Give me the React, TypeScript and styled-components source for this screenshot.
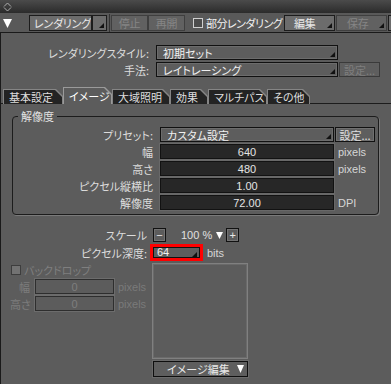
import styled, { createGlobalStyle } from "styled-components";

const GlobalStyle = createGlobalStyle`
  html, body {
    margin: 0;
    padding: 0;
    background: #5c5c5c;
  }
  body {
    font-family: "Noto Sans CJK JP", "Noto Sans", sans-serif;
    font-size: 11px;
    font-feature-settings: "palt";
    color: #dcdcdc;
  }
  * {
    box-sizing: border-box;
  }
`;

const Root = styled.div`
  width: 391px;
  height: 384px;
  overflow: hidden;
  background: #5c5c5c;
  display: flex;
  flex-direction: column;
  line-height: 14px;
`;

const TitleBar = styled.div`
  height: 13px;
  flex: none;
  display: flex;
  align-items: center;
  padding-left: 3px;
  background: linear-gradient(#4b4b4b, #2b2b2b);
`;

const Toolbar = styled.div`
  height: 19px;
  flex: none;
  display: flex;
  align-items: center;
  padding: 1px 0 0 3px;
  background: #595959;
`;

const MenuArrow = styled.svg`
  flex: none;
  margin-right: 17px;
`;

const ToolButton = styled.div<{ $w: number; $disabled?: boolean; $pad?: number }>`
  width: ${(p) => p.$w}px;
  height: 16px;
  flex: none;
  display: flex;
  align-items: center;
  justify-content: ${(p) => (p.$pad === undefined ? "center" : "flex-start")};
  padding-left: ${(p) => p.$pad ?? 0}px;
  border: 1px solid ${(p) => (p.$disabled ? "#3f3f3f" : "#1c1c1c")};
  background: ${(p) => (p.$disabled ? "#616161" : "#6c6c6c")};
  color: ${(p) => (p.$disabled ? "#858585" : "#e8e8e8")};
  letter-spacing: -0.2px;
  overflow: hidden;
  white-space: nowrap;
`;

const Corner = styled.span`
  flex: none;
  width: 5px;
  height: 5px;
  margin: auto 2px 2px auto;
  align-self: flex-end;
  background: #111;
  clip-path: polygon(100% 0, 100% 100%, 0 100%);
`;

const Separator = styled.div`
  width: 1px;
  height: 19px;
  margin: 0 1px 0 2px;
  background: #333;
  flex: none;
`;

const Check = styled.span<{ $disabled?: boolean }>`
  flex: none;
  width: 10px;
  height: 10px;
  border: 1px solid ${(p) => (p.$disabled ? "#3d3d3d" : "#cfcfcf")};
  background: ${(p) => (p.$disabled ? "#727272" : "#4c4c4c")};
`;

const CheckText = styled.span<{ $w?: number; $disabled?: boolean }>`
  flex: none;
  width: ${(p) => (p.$w ? `${p.$w}px` : "auto")};
  margin-left: 3px;
  color: ${(p) => (p.$disabled ? "#7f7f7f" : "#f0f0f0")};
  letter-spacing: ${(p) => (p.$disabled ? "0" : "-0.5px")};
  white-space: nowrap;
`;

const Panel = styled.div`
  flex: 1;
  border-top: 1px solid #1a1a1a;
  border-left: 1px solid #1a1a1a;
  display: flex;
  flex-direction: column;
`;

const StyleRows = styled.div`
  display: flex;
  flex-direction: column;
  gap: 2px;
  padding-top: 12px;
`;

const Row = styled.div<{ $h?: number }>`
  display: flex;
  align-items: center;
  height: ${(p) => p.$h ?? 15}px;
`;

const Label = styled.span<{ $w: number; $gap: number; $disabled?: boolean }>`
  flex: none;
  width: ${(p) => p.$w}px;
  margin-right: ${(p) => p.$gap}px;
  text-align: right;
  white-space: nowrap;
  color: ${(p) => (p.$disabled ? "#7c7c7c" : "#dcdcdc")};
`;

const Select = styled.div<{ $w: number }>`
  flex: none;
  width: ${(p) => p.$w}px;
  height: 15px;
  display: flex;
  align-items: center;
  padding-left: 6px;
  border: 1px solid #111;
  box-shadow: inset 0 0 0 1px #6c6c6c;
  background: #5d5d5d;
  color: #f0f0f0;
`;

const Value = styled.div<{ $w: number; $disabled?: boolean }>`
  flex: none;
  width: ${(p) => p.$w}px;
  height: 15px;
  display: flex;
  align-items: center;
  justify-content: center;
  border: 1px solid ${(p) => (p.$disabled ? "#2e2e2e" : "#121212")};
  box-shadow: 0 0 0 1px ${(p) => (p.$disabled ? "#6c6c6c" : "#686868")};
  background: ${(p) => (p.$disabled ? "#5c5c5c" : "#272727")};
  color: ${(p) => (p.$disabled ? "#7e7e7e" : "#e4e4e4")};
  font-family: "Liberation Sans", sans-serif;
`;

const SmallButton = styled.div<{ $w: number; $disabled?: boolean; $ml?: number }>`
  flex: none;
  width: ${(p) => p.$w}px;
  height: 15px;
  margin-left: ${(p) => p.$ml ?? 2}px;
  display: flex;
  align-items: center;
  justify-content: center;
  border: 1px solid ${(p) => (p.$disabled ? "#3a3a3a" : "#111")};
  box-shadow: inset 0 0 0 1px ${(p) => (p.$disabled ? "#5f5f5f" : "#707070")};
  background: #5e5e5e;
  color: ${(p) => (p.$disabled ? "#7e7e7e" : "#e0e0e0")};
  white-space: nowrap;
`;

const Unit = styled.span<{ $disabled?: boolean }>`
  margin-left: 4px;
  font-family: "Liberation Sans", sans-serif;
  color: ${(p) => (p.$disabled ? "#7a7a7a" : "#d6d6d6")};
`;

const TabBar = styled.div`
  display: flex;
  align-items: flex-end;
  height: 17px;
  margin-top: 10px;
  padding-left: 2px;
  box-shadow: inset 0 -1px 0 #1c1c1c;
`;

const TabShape = styled.div<{ $w: number; $active?: boolean }>`
  flex: none;
  width: ${(p) => p.$w}px;
  height: ${(p) => (p.$active ? 17 : 15)}px;
  padding: 1px 1px 0 1px;
  background: ${(p) => (p.$active ? "#9a9a9a" : "#858585")};
  clip-path: polygon(0 0, calc(100% - 7px) 0, 100% 7px, 100% 100%, 0 100%);
`;

const TabFace = styled.div<{ $active?: boolean }>`
  height: 100%;
  display: flex;
  align-items: center;
  padding-left: 5px;
  background: ${(p) => (p.$active ? "#5c5c5c" : "#232323")};
  color: ${(p) => (p.$active ? "#ffffff" : "#dedede")};
  white-space: nowrap;
  clip-path: polygon(0 0, calc(100% - 7px) 0, 100% 7px, 100% 100%, 0 100%);
`;

const Group = styled.fieldset`
  margin: 5px 0 0 11px;
  width: 367px;
  min-inline-size: 0;
  padding: 4px 0 4px 0;
  border: 1px solid #1c1c1c;
  border-radius: 4px;
  box-shadow: 1px 1px 0 #7a7a7a;
  display: flex;
  flex-direction: column;
  gap: 2px;
`;

const Legend = styled.legend`
  margin-left: 5px;
  padding: 0 3px;
  line-height: 14px;
  color: #e2e2e2;
`;

const Lower = styled.div`
  display: grid;
  grid-template-columns: 149px 1fr;
  row-gap: 2px;
  margin-top: 13px;
`;

const LowLabel = styled.span`
  text-align: right;
  padding-right: 3px;
  align-self: center;
  white-space: nowrap;
`;

const ScaleControls = styled.div`
  display: flex;
  align-items: center;
  height: 14px;
  margin-left: 3px;
  color: #e0e0e0;
  font-family: "Liberation Sans", sans-serif;
`;

const StepButton = styled.div`
  width: 13px;
  height: 14px;
  display: flex;
  align-items: center;
  justify-content: center;
  border: 1px solid #111;
  box-shadow: inset 0 0 0 1px #727272;
  color: #e8e8e8;
  font-size: 11px;
`;

const ScaleValue = styled.span`
  margin: 0 4px 0 15px;
`;

const HighlightFrame = styled.div`
  width: 53px;
  height: 17px;
  border: 3px solid #ff0000;
  display: flex;
`;

const DepthSelect = styled.div`
  flex: 1;
  display: flex;
  align-items: center;
  padding-left: 3px;
  border: 1px solid #111;
  background: #5e5e5e;
  color: #f0f0f0;
  line-height: 9px;
  font-family: "Liberation Sans", sans-serif;
`;

const Backdrop = styled.div`
  margin: 2px 0 0 9px;
  display: flex;
  flex-direction: column;
  gap: 2px;
`;

const CheckRow = styled.div`
  display: flex;
  align-items: center;
  height: 10px;
  margin: 0 0 2px 1px;
`;

const PreviewColumn = styled.div`
  margin-left: 2px;
  display: flex;
  flex-direction: column;
  gap: 2px;
  width: 96px;
`;

const Preview = styled.div`
  height: 96px;
  border: 1px solid #808080;
  box-shadow: inset 0 0 0 1px #6a6a6a;
`;

const EditButton = styled.div`
  height: 16px;
  margin-left: 1px;
  display: flex;
  align-items: center;
  padding: 0 3px 0 13px;
  border: 1px solid #0e0e0e;
  box-shadow: 0 0 0 1px #6a6a6a;
  background: #5e5e5e;
  color: #eaeaea;
`;

const EditText = styled.span`
  flex: 1;
  text-align: left;
`;

const Triangle = ({ w, h, color = "#fff" }: { w: number; h: number; color?: string }) => (
  <svg width={w} height={h} viewBox={`0 0 ${w} ${h}`}>
    <polygon points={`0,0 ${w},0 ${w / 2},${h}`} fill={color} />
  </svg>
);

const tabs = [
  { label: "基本設定", w: 60 },
  { label: "イメージ", w: 49, active: true },
  { label: "大域照明", w: 58 },
  { label: "効果", w: 38 },
  { label: "マルチパス", w: 59 },
  { label: "その他", w: 43 },
];

const resolution = [
  { label: "幅", value: "640", unit: "pixels" },
  { label: "高さ", value: "480", unit: "pixels" },
  { label: "ピクセル縦横比", value: "1.00", unit: "" },
  { label: "解像度", value: "72.00", unit: "DPI" },
];

export default function App() {
  return (
    <>
      <GlobalStyle />
      <Root>
        <TitleBar>
          <svg width="9" height="10" viewBox="0 0 9 10">
            <path d="M1 4.5 L4.5 1 L8 4.5 M1 5.5 L4.5 9 L8 5.5" stroke="#b0b0b0" strokeWidth="1" fill="none" />
          </svg>
        </TitleBar>

        <Toolbar>
          <MenuArrow width="9" height="9" viewBox="0 0 9 9">
            <polygon points="0,0 9,0 4.5,9" fill="#fff" />
          </MenuArrow>
          <ToolButton $w={63} $pad={4}>
            レンダリング
          </ToolButton>
          <ToolButton $w={15}>
            <Corner />
          </ToolButton>
          <Separator />
          <ToolButton $w={37} $disabled>
            停止
          </ToolButton>
          <ToolButton $w={37} $disabled>
            再開
          </ToolButton>
          <Check style={{ marginLeft: 8 }} />
          <CheckText $w={78}>部分レンダリング</CheckText>
          <ToolButton $w={51} $pad={9}>
            編集
            <Corner />
          </ToolButton>
          <ToolButton $w={51} $pad={10} $disabled style={{ marginLeft: 1 }}>
            保存
            <Corner />
          </ToolButton>
          <ToolButton $w={10} style={{ marginLeft: 1 }} />
        </Toolbar>

        <Panel>
          <StyleRows>
            <Row>
              <Label $w={148} $gap={7}>
                レンダリングスタイル:
              </Label>
              <Select $w={182}>
                初期セット
                <Corner />
              </Select>
            </Row>
            <Row>
              <Label $w={148} $gap={7}>
                手法:
              </Label>
              <Select $w={182}>
                レイトレーシング
                <Corner />
              </Select>
              <SmallButton $w={41} $ml={1} $disabled>
                設定...
              </SmallButton>
            </Row>
          </StyleRows>

          <TabBar>
            {tabs.map((t) => (
              <TabShape key={t.label} $w={t.w} $active={t.active}>
                <TabFace $active={t.active}>{t.label}</TabFace>
              </TabShape>
            ))}
          </TabBar>

          <Group>
            <Legend>解像度</Legend>
            <Row>
              <Label $w={140} $gap={7}>
                プリセット:
              </Label>
              <Select $w={174}>
                カスタム設定
                <Corner />
              </Select>
              <SmallButton $w={40} $ml={1}>
                設定...
              </SmallButton>
            </Row>
            {resolution.map((r) => (
              <Row key={r.label}>
                <Label $w={140} $gap={7}>
                  {r.label}
                </Label>
                <Value $w={174}>{r.value}</Value>
                {r.unit && <Unit>{r.unit}</Unit>}
              </Row>
            ))}
          </Group>

          <Lower>
            <LowLabel>スケール</LowLabel>
            <ScaleControls>
              <StepButton>−</StepButton>
              <ScaleValue>100 %</ScaleValue>
              <Triangle w={7} h={7} />
              <StepButton style={{ marginLeft: 3 }}>+</StepButton>
            </ScaleControls>

            <LowLabel>ピクセル深度:</LowLabel>
            <Row $h={17}>
              <HighlightFrame>
                <DepthSelect>
                  64
                  <Corner style={{ marginBottom: 0 }} />
                </DepthSelect>
              </HighlightFrame>
              <Unit>bits</Unit>
            </Row>

            <Backdrop>
              <CheckRow>
                <Check $disabled />
                <CheckText $disabled>バックドロップ</CheckText>
              </CheckRow>
              <Row>
                <Label $w={20} $gap={5} $disabled>
                  幅
                </Label>
                <Value $w={79} $disabled>
                  0
                </Value>
                <Unit $disabled>pixels</Unit>
              </Row>
              <Row>
                <Label $w={20} $gap={5} $disabled>
                  高さ
                </Label>
                <Value $w={79} $disabled>
                  0
                </Value>
                <Unit $disabled>pixels</Unit>
              </Row>
            </Backdrop>
            <PreviewColumn>
              <Preview />
              <EditButton>
                <EditText>イメージ編集</EditText>
                <Triangle w={7} h={8} />
              </EditButton>
            </PreviewColumn>
          </Lower>
        </Panel>
      </Root>
    </>
  );
}
